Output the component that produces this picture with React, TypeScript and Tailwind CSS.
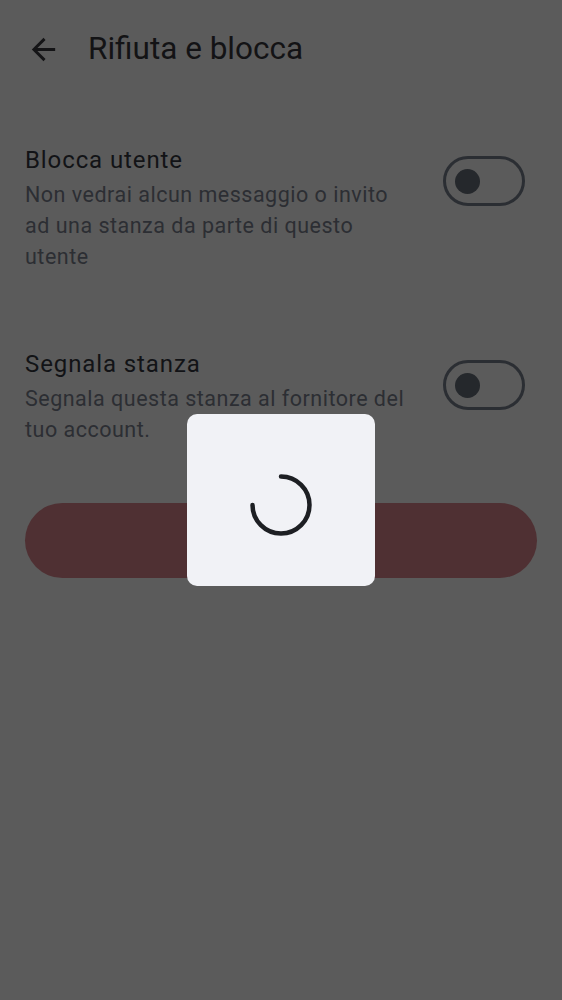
import React from 'react';

const FONT = "font-['Roboto','Liberation_Sans',sans-serif]";

const BackArrow: React.FC = () => (
  <svg viewBox="0 0 24 24" className="w-[35px] h-[35px]" fill="#141416">
    <path d="M20 11H7.83l5.59-5.59L12 4l-8 8 8 8 1.41-1.41L7.83 13H20v-2z" />
  </svg>
);

const Toggle: React.FC = () => (
  <div className="w-[82px] h-[50px] rounded-full border-[3px] border-[#2b2e33] flex items-center pl-[9px] shrink-0">
    <div className="w-[25px] h-[25px] rounded-full bg-[#25282c]" />
  </div>
);

interface SettingRowProps {
  title: string;
  description: string;
}

const SettingRow: React.FC<SettingRowProps> = ({ title, description }) => (
  <div className="flex items-start pl-[25px] pr-[37px]">
    <div className="flex-1 pr-[30px]">
      <div className="text-[24px] leading-[32px] tracking-[0.9px] text-[#121316]">{title}</div>
      <div className="mt-[2.5px] text-[21.5px] leading-[31px] tracking-[0.5px] text-[#2c2e33]">
        {description}
      </div>
    </div>
    <div className="pt-[12px]">
      <Toggle />
    </div>
  </div>
);

const Spinner: React.FC = () => (
  <svg width="66" height="66" viewBox="0 0 66 66">
    <path
      d="M33 4.5 A28.5 28.5 0 1 1 4.5 33"
      fill="none"
      stroke="#1d1f23"
      strokeWidth="4.5"
      strokeLinecap="round"
    />
  </svg>
);

export default function App() {
  return (
    <div className={`${FONT} min-h-screen w-full bg-[#5b5b5b] relative`}>
      <div className="h-[98px] flex items-center pl-[26px]">
        <BackArrow />
        <div className="ml-[27px] text-[31.5px] text-[#131315]">Rifiuta e blocca</div>
      </div>
      <div className="pt-[46px]">
        <SettingRow
          title="Blocca utente"
          description="Non vedrai alcun messaggio o invito ad una stanza da parte di questo utente"
        />
      </div>
      <div className="pt-[76.5px]">
        <SettingRow
          title="Segnala stanza"
          description="Segnala questa stanza al fornitore del tuo account."
        />
      </div>
      <div className="px-[25px] pt-[58px]">
        <div className="h-[75px] rounded-full bg-[#4f3033]" />
      </div>

      <div className="fixed inset-0 flex items-center justify-center">
        <div className="w-[188px] h-[172px] rounded-[10px] bg-[#f1f2f6] flex items-center justify-center pt-[10px]">
          <Spinner />
        </div>
      </div>
    </div>
  );
}
